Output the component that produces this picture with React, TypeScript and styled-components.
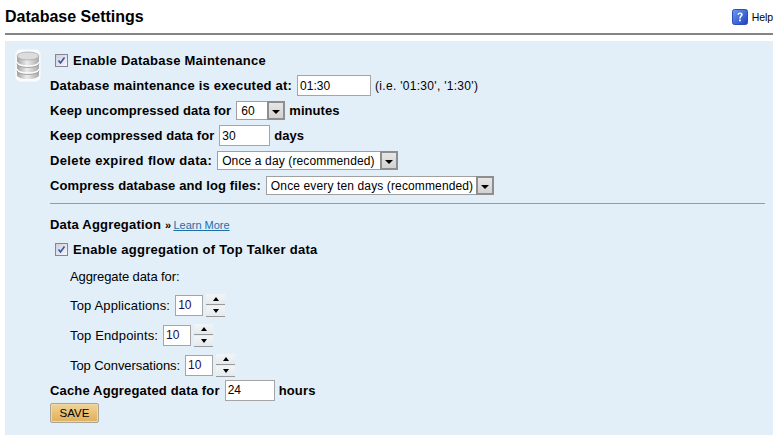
import styled, { createGlobalStyle } from 'styled-components';

const GlobalStyle = createGlobalStyle`
  html, body {
    margin: 0;
    padding: 0;
    background: #fff;
    color: #000;
    font-family: "Liberation Sans", Arial, sans-serif;
  }
`;

const Page = styled.div`
  width: 780px;
  height: 440px;
  overflow: hidden;
  box-sizing: border-box;
  padding: 0 7px 0 5px;
`;

const Header = styled.div`
  height: 33px;
  display: flex;
  align-items: center;
  justify-content: space-between;
  border-bottom: 2px solid #848484;
`;

const Title = styled.h1`
  margin: 0;
  font-size: 16px;
  font-weight: bold;
  line-height: 20px;
`;

const HelpLink = styled.div`
  display: flex;
  align-items: center;
  gap: 4px;
  font-size: 10.5px;
  letter-spacing: -0.1px;
`;

const Panel = styled.div`
  margin-top: 6px;
  height: 394px;
  box-sizing: border-box;
  background: #e3eff8;
  display: flex;
  padding: 7px 8px 0 10px;
`;

const IconColumn = styled.div`
  width: 35px;
  flex: none;
  padding-top: 1px;
`;

const Content = styled.div`
  flex: 1;
  min-width: 0;
`;

const Row = styled.div<{ $h?: number; $indent?: number; $ls?: number }>`
  height: ${p => p.$h ?? 25}px;
  display: flex;
  align-items: center;
  padding-left: ${p => p.$indent ?? 0}px;
  font-size: 13px;
  font-weight: bold;
  letter-spacing: ${p => p.$ls ?? 0.2}px;
  white-space: pre;
`;

const Plain = styled.span<{ $ls?: number }>`
  font-size: 13px;
  font-weight: normal;
  letter-spacing: ${p => p.$ls ?? 0.15}px;
`;

const Note = styled.span`
  font-size: 12px;
  font-weight: normal;
  letter-spacing: 0.3px;
`;

const Field = styled.input<{ $w: number }>`
  width: ${p => p.$w}px;
  height: 21px;
  box-sizing: border-box;
  margin: 0 4px 0 5px;
  padding: 0 2px;
  border: 1px solid #a5a5a5;
  background: #fff;
  color: #000;
  font: 12px "Liberation Sans", Arial, sans-serif;
  outline: none;
`;

const SpinField = styled(Field)`
  color: #1a0a50;
  margin: 0 3px 0 5px;
`;

const Select = styled.div<{ $w: number }>`
  width: ${p => p.$w}px;
  height: 19px;
  box-sizing: border-box;
  margin: 0 4px 0 5px;
  border: 1px solid #a0a0a0;
  background: #fff;
  display: flex;
  align-items: center;
  justify-content: space-between;
  font-size: 12px;
  font-weight: normal;
  letter-spacing: 0.13px;
  padding-left: 4px;
`;

const SelectArrow = styled.span`
  width: 18px;
  height: 19px;
  flex: none;
  margin-right: -1px;
  box-sizing: border-box;
  border: 2px solid #8e8e8e;
  background: linear-gradient(#e6e6e6, #d2d2d2);
  display: flex;
  align-items: center;
  justify-content: center;
  &::after {
    content: '';
    margin-top: 2px;
    border-left: 4px solid transparent;
    border-right: 4px solid transparent;
    border-top: 4px solid #000;
  }
`;

const Check = styled.span`
  width: 13px;
  height: 13px;
  box-sizing: border-box;
  margin: 0 5px 0 5px;
  border: 1px solid #85859a;
  background: linear-gradient(135deg, #cfcfd8, #f6f6fa);
  display: flex;
  align-items: center;
  justify-content: center;
`;

const Rule = styled.div`
  height: 1px;
  background: #9a9a9a;
  margin: 5px 0 8px 0;
`;

const LearnMore = styled.a`
  font-size: 11px;
  font-weight: normal;
  letter-spacing: 0;
  color: #1c6ea8;
  text-decoration: underline;
`;

const Chevrons = styled.span`
  font-size: 11px;
  margin-left: 4px;
  margin-right: 2px;
`;

const Spinner = styled.div`
  width: 19px;
  display: flex;
  flex-direction: column;
  gap: 1px;
`;

const SpinButton = styled.span<{ $down?: boolean }>`
  height: 10px;
  background: linear-gradient(#f2f5f7, #e4eaee);
  border-bottom: 1px solid #999;
  display: flex;
  align-items: center;
  justify-content: center;
  &::after {
    content: '';
    border-left: 3px solid transparent;
    border-right: 3px solid transparent;
    ${p => (p.$down ? 'border-top: 4px solid #000;' : 'border-bottom: 4px solid #000;')}
  }
`;

const SaveButton = styled.button`
  display: block;
  width: 49px;
  height: 20px;
  margin-top: 3px;
  padding: 0;
  box-sizing: border-box;
  border: 1px solid #aaa59a;
  border-radius: 2px;
  background: linear-gradient(#f0d49a, #e8bf70 55%, #deaf5c);
  box-shadow: inset 0 0 0 1px #f0d8a4;
  color: #000;
  font: 11.5px "Liberation Sans", Arial, sans-serif;
`;

const DatabaseIcon = () => (
  <svg width="26" height="33" viewBox="0 0 26 33">
    <defs>
      <linearGradient id="drum" x1="0" x2="1" y1="0" y2="0">
        <stop offset="0" stopColor="#a2a2a2" />
        <stop offset="0.45" stopColor="#ececec" />
        <stop offset="1" stopColor="#ababab" />
      </linearGradient>
    </defs>
    <rect x="0.5" y="0.5" width="25" height="32" rx="5" fill="#fff" opacity="0.8" />
    <path d="M2 7v19c0 2.5 5 4 11 4s11-1.500 11-4V7z" fill="url(#drum)" />
    <ellipse cx="13" cy="7" rx="11" ry="4" fill="#dcdcdc" stroke="#a0a0a0" strokeWidth="0.7" />
    <path d="M2 13c0 2.500 5 4 11 4s11-1.500 11-4" fill="none" stroke="#fafafa" strokeWidth="1.600" />
    <path d="M2 20c0 2.500 5 4 11 4s11-1.500 11-4" fill="none" stroke="#fafafa" strokeWidth="1.600" />
    <path d="M2 14.500c0 2.500 5 4 11 4s11-1.500 11-4" fill="none" stroke="#999" strokeWidth="0.800" />
    <path d="M2 21.500c0 2.500 5 4 11 4s11-1.500 11-4" fill="none" stroke="#999" strokeWidth="0.800" />
  </svg>
);

const HelpIcon = () => (
  <svg width="16" height="16" viewBox="0 0 16 16">
    <defs>
      <linearGradient id="help" x1="0" x2="1" y1="0" y2="1">
        <stop offset="0" stopColor="#6f9df0" />
        <stop offset="1" stopColor="#1c3fc0" />
      </linearGradient>
    </defs>
    <rect x="0.500" y="0.500" width="15" height="15" rx="2" fill="url(#help)" stroke="#2a4fb8" />
    <path d="M5.500 5.800C5.700 4.200 6.800 3.400 8.200 3.400c1.500 0 2.500.9 2.500 2.200 0 1.900-2 1.900-2 3.800H7.200c0-2.500 1.800-2.500 1.800-3.700 0-.6-.3-1-.9-1-.7 0-1 .5-1.100 1.100z" fill="#fff" />
    <rect x="7.100" y="10.500" width="1.700" height="1.800" fill="#fff" />
  </svg>
);

const CheckMark = () => (
  <svg width="9" height="9" viewBox="0 0 9 9">
    <path d="M1.500 4.500 3.500 7 7.500 1.500" fill="none" stroke="#3a52a8" strokeWidth="1.600" />
  </svg>
);

const SpinRow = ({ label, value, ls }: { label: string; value: string; ls?: number }) => (
  <Row $h={30} $indent={20}>
    <Plain $ls={ls}>{label}</Plain>
    <SpinField $w={28} defaultValue={value} />
    <Spinner>
      <SpinButton />
      <SpinButton $down />
    </Spinner>
  </Row>
);

const App = () => (
  <Page>
    <GlobalStyle />
    <Header>
      <Title>Database Settings</Title>
      <HelpLink>
        <HelpIcon />
        Help
      </HelpLink>
    </Header>
    <Panel>
      <IconColumn>
        <DatabaseIcon />
      </IconColumn>
      <Content>
        <Row $ls={0.24}>
          <Check><CheckMark /></Check>
          Enable Database Maintenance
        </Row>
        <Row>
          Database maintenance is executed at:
          <Field $w={74} defaultValue="01:30" />
          <Note>(i.e. '01:30', '1:30')</Note>
        </Row>
        <Row $ls={0.08}>
          Keep uncompressed data for
          <Select $w={49}>60<SelectArrow /></Select>
          minutes
        </Row>
        <Row $ls={0.04}>
          Keep compressed data for
          <Field $w={51} defaultValue="30" />
          days
        </Row>
        <Row $ls={0.36}>
          Delete expired flow data:
          <Select $w={181}>Once a day (recommended)<SelectArrow /></Select>
        </Row>
        <Row $ls={0.11}>
          Compress database and log files:
          <Select $w={228}>Once every ten days (recommended)<SelectArrow /></Select>
        </Row>
        <Rule />
        <Row>
          Data Aggregation
          <Chevrons>»</Chevrons>
          <LearnMore>Learn More</LearnMore>
        </Row>
        <Row $ls={0.28}>
          <Check><CheckMark /></Check>
          Enable aggregation of Top Talker data
        </Row>
        <Row $h={28} $indent={20}>
          <Plain $ls={-0.1}>Aggregate data for:</Plain>
        </Row>
        <SpinRow label="Top Applications:" value="10" />
        <SpinRow label="Top Endpoints:" value="10" />
        <SpinRow label="Top Conversations:" value="10" ls={-0.07} />
        <Row $h={20} $ls={0.16}>
          Cache Aggregated data for
          <Field $w={50} defaultValue="24" />
          hours
        </Row>
        <SaveButton>SAVE</SaveButton>
      </Content>
    </Panel>
  </Page>
);

export default App;
